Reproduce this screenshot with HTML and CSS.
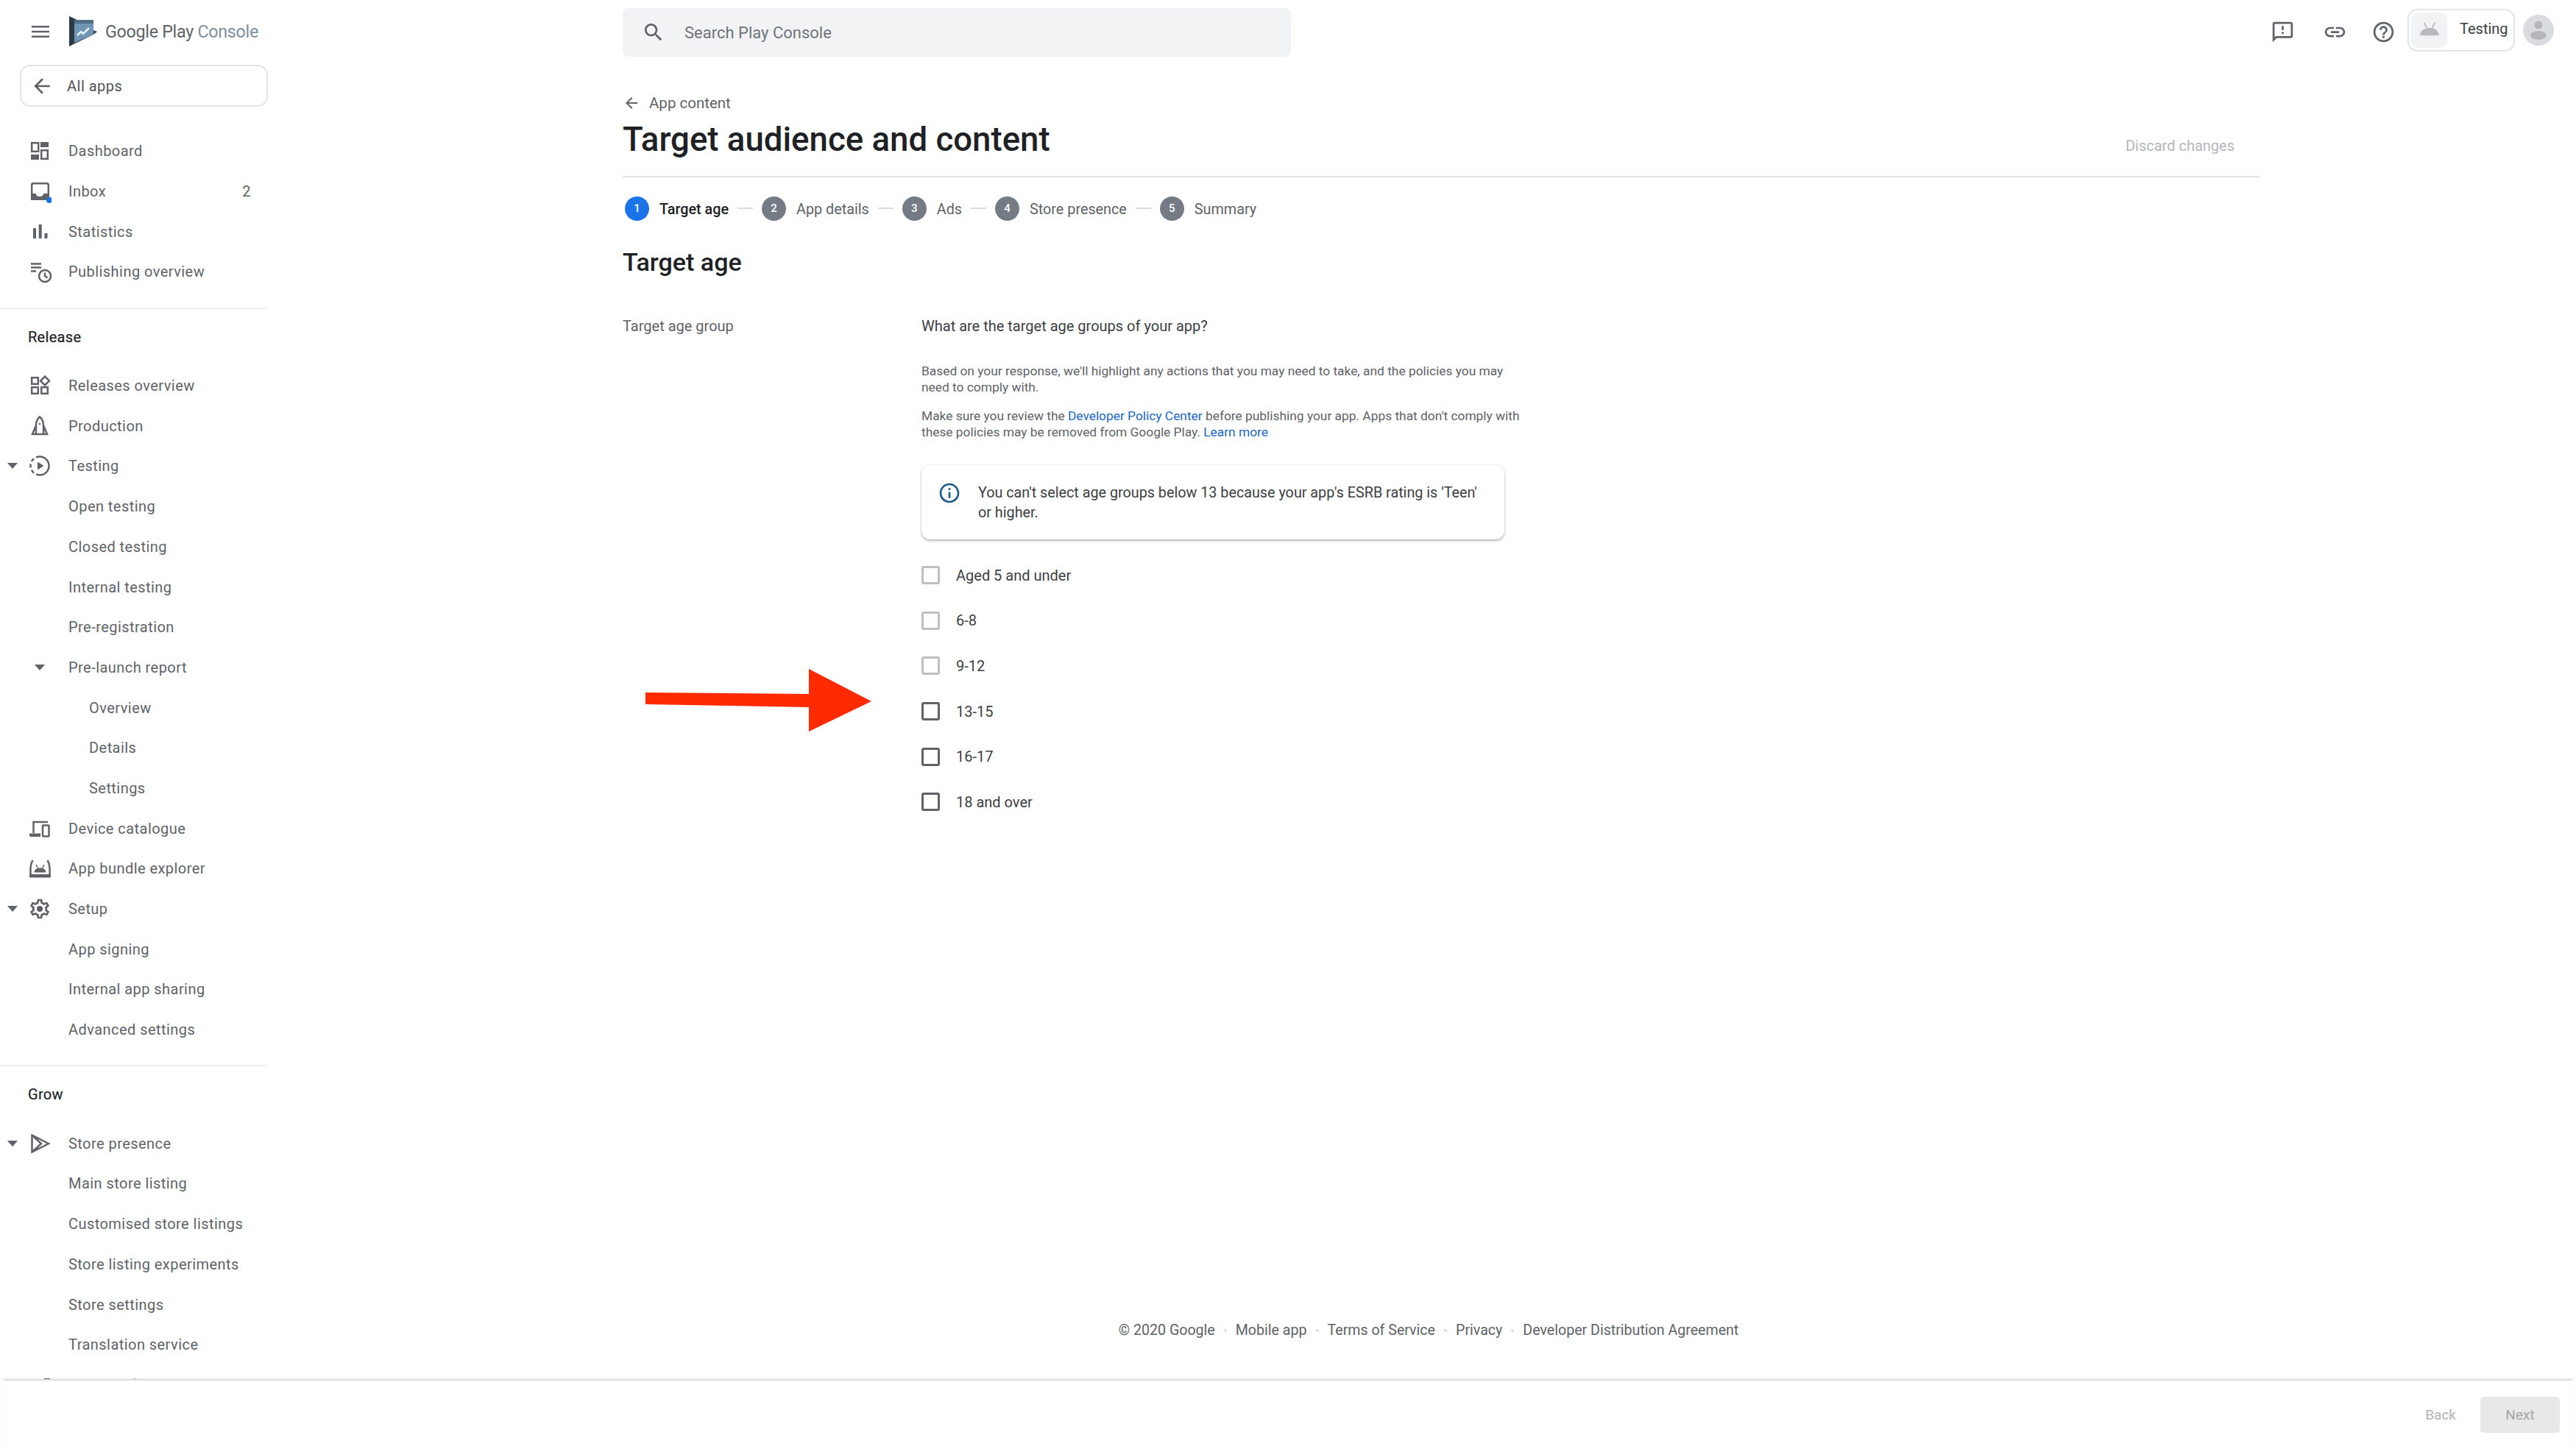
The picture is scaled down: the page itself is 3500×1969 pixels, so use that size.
FILE: index.html
```html
<!DOCTYPE html>
<html lang="en">
<head>
<meta charset="utf-8">
<title>Target audience and content</title>
<link rel="stylesheet" href="styles.css">
</head>
<body>
<svg class="defs" width="0" height="0" aria-hidden="true">
  <symbol id="i-back" viewBox="0 0 24 24"><path d="M20 11H7.83l5.59-5.59L12 4l-8 8 8 8 1.41-1.41L7.83 13H20v-2z"/></symbol>
  <symbol id="i-search" viewBox="0 0 24 24"><path d="M15.5 14h-.79l-.28-.27C15.41 12.59 16 11.11 16 9.5 16 5.91 13.09 3 9.5 3S3 5.91 3 9.5 5.91 16 9.5 16c1.61 0 3.09-.59 4.23-1.57l.27.28v.79l5 4.99L20.49 19l-4.99-5zm-6 0C7.01 14 5 11.99 5 9.5S7.01 5 9.5 5 14 7.01 14 9.5 11.99 14 9.5 14z"/></symbol>
  <symbol id="i-feedback" viewBox="0 0 24 24"><path d="M20 2H4c-1.1 0-1.99.9-1.99 2L2 22l4-4h14c1.1 0 2-.9 2-2V4c0-1.1-.9-2-2-2zm0 14H5.17L4 17.17V4h16v12zm-9-4h2v2h-2zm0-6h2v4h-2z"/></symbol>
  <symbol id="i-link" viewBox="0 0 24 24"><path d="M3.9 12c0-1.71 1.39-3.1 3.1-3.1h4V7H7c-2.76 0-5 2.24-5 5s2.24 5 5 5h4v-1.9H7c-1.71 0-3.1-1.39-3.1-3.1zM8 13h8v-2H8v2zm9-6h-4v1.9h4c1.71 0 3.1 1.39 3.1 3.1s-1.39 3.1-3.1 3.1h-4V17h4c2.76 0 5-2.24 5-5s-2.24-5-5-5z"/></symbol>
  <symbol id="i-help" viewBox="0 0 24 24"><path d="M11 18h2v-2h-2v2zm1-16C6.48 2 2 6.48 2 12s4.48 10 10 10 10-4.48 10-10S17.52 2 12 2zm0 18c-4.41 0-8-3.59-8-8s3.59-8 8-8 8 3.59 8 8-3.59 8-8 8zm0-14c-2.21 0-4 1.79-4 4h2c0-1.1.9-2 2-2s2 .9 2 2c0 2-3 1.75-3 5h2c0-2.25 3-2.5 3-5 0-2.21-1.79-4-4-4z"/></symbol>
  <symbol id="i-info" viewBox="0 0 24 24"><path d="M11 7h2v2h-2zm0 4h2v6h-2zm1-9C6.48 2 2 6.48 2 12s4.48 10 10 10 10-4.48 10-10S17.52 2 12 2zm0 18c-4.41 0-8-3.59-8-8s3.59-8 8-8 8 3.59 8 8-3.59 8-8 8z"/></symbol>
  <symbol id="i-gear" viewBox="0 0 24 24"><path d="M19.43 12.98c.04-.32.07-.64.07-.98 0-.34-.03-.66-.07-.98l2.11-1.65c.19-.15.24-.42.12-.64l-2-3.46c-.09-.16-.26-.25-.44-.25-.06 0-.12.01-.17.03l-2.49 1c-.52-.4-1.08-.73-1.69-.98l-.38-2.65C14.46 2.18 14.25 2 14 2h-4c-.25 0-.46.18-.49.42l-.38 2.65c-.61.25-1.17.59-1.69.98l-2.49-1c-.06-.02-.12-.03-.18-.03-.17 0-.34.09-.43.25l-2 3.46c-.13.22-.07.49.12.64l2.11 1.65c-.04.32-.07.65-.07.98 0 .33.03.66.07.98l-2.11 1.65c-.19.15-.24.42-.12.64l2 3.46c.09.16.26.25.44.25.06 0 .12-.01.17-.03l2.49-1c.52.4 1.08.73 1.69.98l.38 2.65c.03.24.24.42.49.42h4c.25 0 .46-.18.49-.42l.38-2.65c.61-.25 1.17-.59 1.69-.98l2.49 1c.06.02.12.03.18.03.17 0 .34-.09.43-.25l2-3.46c.12-.22.07-.49-.12-.64l-2.11-1.65zm-1.98-1.71c.04.31.05.52.05.73 0 .21-.02.43-.05.73l-.14 1.13.89.7 1.08.84-.7 1.21-1.27-.51-1.04-.42-.9.68c-.43.32-.84.56-1.25.73l-1.06.43-.16 1.13-.2 1.35h-1.4l-.19-1.35-.16-1.13-1.06-.43c-.43-.18-.83-.41-1.23-.71l-.91-.7-1.06.43-1.27.51-.7-1.21 1.08-.84.89-.7-.14-1.13c-.03-.31-.05-.54-.05-.74s.02-.43.05-.73l.14-1.13-.89-.7-1.08-.84.7-1.21 1.27.51 1.04.42.9-.68c.43-.32.84-.56 1.25-.73l1.06-.43.16-1.13.2-1.35h1.39l.19 1.35.16 1.13 1.06.43c.43.18.83.41 1.23.71l.91.7 1.06-.43 1.27-.51.7 1.21-1.07.85-.89.7.14 1.13z"/><circle cx="12" cy="12" r="3"/></symbol>
  <symbol id="i-caret" viewBox="0 0 14 8"><path d="M0 0h14L7 8z"/></symbol>
</svg>

<div class="app">
  <div class="main">
    <aside class="sidebar">
      <div class="brand">
        <svg class="menu" viewBox="0 0 24 16"><path d="M0 1.2h24M0 8h24M0 14.8h24"/></svg>
        <svg class="logo" viewBox="0 0 38 42">
          <path class="logo-dark" d="M0 0l11 5h22v14l5 2-5 4L0 41z"/>
          <path class="logo-side" d="M0 0l7 5v31l-7 5z"/>
          <path class="logo-top" d="M7 5h26v5H7z"/>
          <path class="logo-screen" d="M7 10h26v15L7 36z"/>
          <path class="logo-line" d="M11 26l5-5 3 3 8-8" />
        </svg>
        <span class="brand-name">Google Play <span class="brand-soft">Console</span></span>
      </div>
      <a class="all-apps"><svg class="ic all-back"><use href="#i-back"/></svg><span>All apps</span></a>

      <nav class="nav first">
        <a class="row"><i class="slot"></i><svg class="icon" viewBox="0 0 32 32"><rect class="ol" x="5.2" y="5.2" width="9" height="11.6"/><rect x="17" y="4" width="11" height="7"/><rect x="4" y="21" width="11" height="7"/><rect class="ol" x="18.2" y="15.2" width="8.6" height="11.6"/></svg><span>Dashboard</span></a>
        <a class="row"><i class="slot"></i><svg class="icon" viewBox="0 0 32 32"><rect class="ol" x="5.2" y="5.2" width="22.6" height="21.6" rx="2"/><path d="M4 19h7c0 3 2 4 5 4s5-1 5-4h8v9H4z"/><circle class="dot" cx="29" cy="28" r="4"/></svg><span>Inbox</span><b class="count">2</b></a>
        <a class="row"><i class="slot"></i><svg class="icon" viewBox="0 0 32 32"><rect x="7" y="11" width="4" height="14"/><rect x="14.7" y="6" width="4" height="19"/><rect x="22.5" y="18" width="4" height="7"/></svg><span>Statistics</span></a>
        <a class="row"><i class="slot"></i><svg class="icon" viewBox="0 0 32 32"><path class="ln" d="M4 5.5h14M4 10.5h14M4 15.5h7"/><circle class="ln" cx="23" cy="22" r="8"/><path class="ln" d="M23 17.5V22l3.5 2.5"/></svg><span>Publishing overview</span></a>
      </nav>

      <div class="rule"></div>
      <div class="group">Release</div>
      <nav class="nav">
        <a class="row"><i class="slot"></i><svg class="icon" viewBox="0 0 32 32"><rect class="ol" x="5.2" y="5.2" width="8.6" height="8.6"/><rect class="ol" x="5.2" y="18.2" width="8.6" height="8.6"/><rect class="ol" x="18.2" y="18.2" width="8.6" height="8.6"/><path class="ln" d="M23 3.5l6 6-6 6-6-6z"/></svg><span>Releases overview</span></a>
        <a class="row"><i class="slot"></i><svg class="icon" viewBox="0 0 32 32"><path class="ln" d="M6 27l5-12c0-5 2-9 5-11.500 3 2.500 5 6.500 5 11.500l5 12zM11 15v12M21 15v12"/><circle cx="16" cy="13" r="1.300"/></svg><span>Production</span></a>
        <a class="row"><i class="slot"><svg class="caret"><use href="#i-caret"/></svg></i><svg class="icon" viewBox="0 0 32 32"><path class="ln" d="M16 3.500a12.500 12.500 0 0 1 0 25"/><path class="ln dash" d="M16 28.500a12.500 12.500 0 0 1 0-25"/><path d="M13 10.500l8.500 5.500-8.500 5.500z"/></svg><span>Testing</span></a>
        <a class="row"><i class="slot"></i><i class="icon"></i><span>Open testing</span></a>
        <a class="row"><i class="slot"></i><i class="icon"></i><span>Closed testing</span></a>
        <a class="row"><i class="slot"></i><i class="icon"></i><span>Internal testing</span></a>
        <a class="row"><i class="slot"></i><i class="icon"></i><span>Pre-registration</span></a>
        <a class="row"><i class="slot"></i><i class="icon icon-caret"><svg class="caret"><use href="#i-caret"/></svg></i><span>Pre-launch report</span></a>
        <a class="row sub"><i class="slot"></i><i class="icon"></i><span>Overview</span></a>
        <a class="row sub"><i class="slot"></i><i class="icon"></i><span>Details</span></a>
        <a class="row sub"><i class="slot"></i><i class="icon"></i><span>Settings</span></a>
        <a class="row"><i class="slot"></i><svg class="icon" viewBox="0 0 32 32"><path class="ln" d="M27 7H7.500v15"/><path d="M2 22.500h15V27H3.500A1.500 1.500 0 0 1 2 25.500z"/><rect class="ol" x="20" y="11.500" width="8.500" height="15" rx="1"/></svg><span>Device catalogue</span></a>
        <a class="row"><i class="slot"></i><svg class="icon" viewBox="0 0 32 32"><path class="ln" d="M6.500 5C4 9 3.500 12 3.500 15v11.500h26V15c0-3-.5-6-3-10"/><path d="M8.500 21.500c.3-3.500 2.500-6 8-6s7.700 2.500 8 6z"/><path class="thin" d="M11 11l2.500 4.500M22 11l-2.500 4.500"/><rect x="2" y="24" width="29" height="4.500" rx="1"/></svg><span>App bundle explorer</span></a>
        <a class="row"><i class="slot"><svg class="caret"><use href="#i-caret"/></svg></i><svg class="icon"><use href="#i-gear"/></svg><span>Setup</span></a>
        <a class="row"><i class="slot"></i><i class="icon"></i><span>App signing</span></a>
        <a class="row"><i class="slot"></i><i class="icon"></i><span>Internal app sharing</span></a>
        <a class="row"><i class="slot"></i><i class="icon"></i><span>Advanced settings</span></a>
      </nav>

      <div class="rule"></div>
      <div class="group">Grow</div>
      <nav class="nav">
        <a class="row"><i class="slot"><svg class="caret"><use href="#i-caret"/></svg></i><svg class="icon" viewBox="0 0 32 32"><path class="ln" d="M5.500 4.500v23L28 16zM5.500 4.500L18 16 5.500 27.500"/></svg><span>Store presence</span></a>
        <a class="row"><i class="slot"></i><i class="icon"></i><span>Main store listing</span></a>
        <a class="row"><i class="slot"></i><i class="icon"></i><span>Customised store listings</span></a>
        <a class="row"><i class="slot"></i><i class="icon"></i><span>Store listing experiments</span></a>
        <a class="row"><i class="slot"></i><i class="icon"></i><span>Store settings</span></a>
        <a class="row"><i class="slot"></i><i class="icon"></i><span>Translation service</span></a>
        <a class="row"><i class="slot"></i><svg class="icon" viewBox="0 0 32 32"><rect x="22" y="7" width="8" height="20"/></svg><span>Store performance</span></a>
      </nav>
    </aside>

    <main class="content">
      <header class="topbar">
        <div class="search"><svg class="ic"><use href="#i-search"/></svg><span>Search Play Console</span></div>
        <div class="actions">
          <svg class="ic action"><use href="#i-feedback"/></svg>
          <svg class="ic action"><use href="#i-link"/></svg>
          <svg class="ic action"><use href="#i-help"/></svg>
          <div class="chip">
            <span class="chip-icon"><svg viewBox="0 0 32 24"><path d="M2 22c.3-7 6-11 14-11s13.700 4 14 11z"/><path class="android" d="M8 3l4 8M24 3l-4 8"/></svg></span>
            <span class="chip-text">Testing</span>
          </div>
          <span class="avatar"><svg viewBox="0 0 42 42"><circle cx="21" cy="14" r="5.500"/><ellipse cx="21" cy="28" rx="11" ry="6"/></svg></span>
        </div>
      </header>

      <div class="page">
        <a class="crumb"><svg class="ic"><use href="#i-back"/></svg><span>App content</span></a>
        <div class="title-row">
          <h1>Target audience and content</h1>
          <span class="discard">Discard changes</span>
        </div>

        <ol class="steps">
          <li class="step active"><b>1</b><span>Target age</span></li>
          <li class="link"></li>
          <li class="step"><b>2</b><span>App details</span></li>
          <li class="link"></li>
          <li class="step"><b>3</b><span>Ads</span></li>
          <li class="link"></li>
          <li class="step"><b>4</b><span>Store presence</span></li>
          <li class="link"></li>
          <li class="step"><b>5</b><span>Summary</span></li>
        </ol>

        <h2>Target age</h2>

        <section class="form">
          <div class="form-label">Target age group</div>
          <div class="form-body">
            <div class="question">What are the target age groups of your app?</div>
            <p class="note first-note">Based on your response, we'll highlight any actions that you may need to take, and the policies you may need to comply with.</p>
            <p class="note second-note">Make sure you review the <a>Developer Policy Center</a> before publishing your app. Apps that don't comply with these policies may be removed from Google Play. <a>Learn more</a></p>
            <div class="card"><svg class="ic info"><use href="#i-info"/></svg><span>You can't select age groups below 13 because your app's ESRB rating is 'Teen' or higher.</span></div>
            <ul class="options">
              <li class="option off"><i class="box"></i><span>Aged 5 and under</span></li>
              <li class="option off"><i class="box"></i><span>6-8</span></li>
              <li class="option off"><i class="box"></i><span>9-12</span></li>
              <li class="option"><i class="box"></i><span>13-15</span></li>
              <li class="option"><i class="box"></i><span>16-17</span></li>
              <li class="option"><i class="box"></i><span>18 and over</span></li>
            </ul>
          </div>
        </section>

        <footer class="footer">
          <span>© 2020 Google</span><i></i><a>Mobile app</a><i></i><a>Terms of Service</a><i></i><a>Privacy</a><i></i><a>Developer Distribution Agreement</a>
        </footer>
      </div>
    </main>
  </div>

  <div class="bottom">
    <span class="btn-back">Back</span>
    <span class="btn-next">Next</span>
  </div>

  <svg class="arrow" viewBox="0 0 308 86"><polygon points="0,32 222,34 222,0 307,44 222,85 222,52 0,48"/></svg>
</div>
</body>
</html>
```

FILE: styles.css
```css
* { box-sizing: border-box; }
html, body { margin: 0; padding: 0; background: #fff; }
body { font-family: Roboto, "Liberation Sans", sans-serif; color: #202124; }
a { color: inherit; text-decoration: none; }
.defs { position: absolute; }
.ic { fill: #5f6368; display: block; flex: none; }

.app { position: relative; width: 3500px; height: 1969px; display: flex; flex-direction: column; overflow: hidden; }
.main { flex: 1; min-height: 0; display: flex; overflow: hidden; }

/* sidebar */
.sidebar { width: 364px; flex: none; overflow: hidden; color: #5f6368; font-size: 20px; letter-spacing: .45px; }
.brand { height: 88px; display: flex; align-items: flex-start; padding: 22px 0 0 43px; }
.menu { width: 24px; height: 16px; margin: 13px 27px 0 0; fill: none; stroke: #5f6368; stroke-width: 2.4; }
.logo { width: 38px; height: 42px; margin-right: 11px; }
.logo-dark { fill: #37474f; }
.logo-side { fill: #2b3a44; }
.logo-top { fill: #4f6f87; }
.logo-screen { fill: #6f97b3; }
.logo-line { fill: none; stroke: #e6eff5; stroke-width: 2.600; }
.brand-name { font-size: 23.300px; letter-spacing: -.3px; line-height: 42px; color: #5f6368; white-space: nowrap; }
.brand-soft { color: #7f8f9c; }
.all-apps { display: flex; align-items: center; height: 57px; width: 337px; margin-left: 27px; border: 2px solid #e3e4e6; border-radius: 14px; color: #4f5358; letter-spacing: .5px; }
.all-back { width: 32px; height: 32px; margin: 0 18px 0 12px; }

.nav.first { margin-top: 33px; }
.row { display: flex; align-items: center; height: 54.700px; white-space: nowrap; }
.slot { width: 38px; flex: none; padding-left: 10px; display: flex; align-items: center; }
.icon { width: 32px; height: 32px; flex: none; margin-right: 23px; fill: #5f6368; display: flex; align-items: center; justify-content: center; }
.sub span { margin-left: 28px; }
.caret { width: 14px; height: 8px; fill: #5f6368; display: block; }
.ol, .ln { fill: none; stroke: #5f6368; stroke-width: 2.500; }
.thin { fill: none; stroke: #5f6368; stroke-width: 1.500; }
.dash { stroke-dasharray: 5 3.500; }
.dot { fill: #1a73e8; }
.count { margin-left: auto; margin-right: 23px; font-weight: 400; }
.rule { height: 2px; width: 362px; background: #eff0f1; margin-top: 21px; }
.group { height: 52px; margin: 12px 0 13px; padding-left: 38px; line-height: 52px; color: #202124; letter-spacing: .3px; -webkit-text-stroke: .2px #202124; }

/* content */
.content { flex: 1; min-width: 0; padding-left: 482px; display: flex; flex-direction: column; }
.topbar { height: 88px; flex: none; display: flex; align-items: flex-start; justify-content: space-between; padding-right: 30px; }
.search { width: 908px; height: 66px; margin-top: 11px; background: #f1f3f4; border-radius: 8px; display: flex; align-items: center; gap: 26px; padding-left: 26px; font-size: 22px; color: #70757a; }
.search .ic { width: 32px; height: 32px; }
.actions { display: flex; align-items: flex-start; }
.action { width: 33px; height: 33px; margin-top: 27px; margin-right: 38px; }
.action:nth-child(2) { margin-right: 33px; }
.action:nth-child(3) { margin-right: 16px; }
.chip { width: 146px; height: 58px; margin-top: 12px; border: 2px solid #e3e4e6; border-radius: 14px; padding: 3px; display: flex; align-items: center; gap: 17px; }
.chip-icon { width: 49px; height: 48px; flex: none; border-radius: 10px; background: #f1f3f4; display: flex; align-items: center; justify-content: center; }
.chip-icon svg { width: 30px; height: 22px; margin-top: -4px; fill: #b8bbbe; }
.android { fill: none; stroke: #b8bbbe; stroke-width: 2; }
.chip-text { font-size: 20px; color: #3c4043; margin-top: -4px; }
.avatar { width: 42px; height: 42px; margin: 20px 0 0 11px; border-radius: 50%; background: #dadce0; display: block; }
.avatar svg { width: 42px; height: 42px; fill: #b4b6b9; display: block; }

.page { flex: 1; min-height: 0; width: 2224px; display: flex; flex-direction: column; }
.crumb { margin-top: 37px; height: 30px; display: flex; align-items: center; gap: 12px; color: #5f6368; font-size: 20.500px; }
.crumb .ic { width: 24px; height: 24px; }
.title-row { margin-top: 9px; padding-bottom: 23px; border-bottom: 2px solid #e3e4e6; display: flex; justify-content: space-between; }
h1 { margin: 0; font-size: 45.600px; line-height: 52px; font-weight: 500; color: #202124; }
.discard { margin: 20px 34px 0 0; font-size: 20px; line-height: 28px; color: #b4b6b9; }
.steps { list-style: none; margin: 25px 0 0; padding: 0 0 0 3px; height: 34px; display: flex; align-items: center; font-size: 19.800px; color: #5f6368; }
.step { display: flex; align-items: center; gap: 14px; }
.step span { position: relative; top: 1px; }
.step b { width: 33px; height: 33px; border-radius: 50%; background: #757b85; color: #fff; font-size: 15px; font-weight: 500; display: flex; align-items: center; justify-content: center; }
.step.active b { background: #1a73e8; }
.step.active span { color: #202124; font-weight: 500; }
.link { width: 21px; height: 2px; margin: 0 12px 0 12px; background: #dadce0; }
h2 { margin: 36px 0 0; font-size: 34px; line-height: 40px; font-weight: 500; color: #202124; }

.form { margin-top: 53px; display: flex; font-size: 20px; line-height: 28px; }
.form-label { width: 406px; flex: none; color: #5f6368; }
.form-body { width: 820px; }
.question { color: #3c4043; }
.note { width: 820px; margin: 0; font-size: 17.350px; line-height: 22px; color: #5f6368; }
.first-note { margin-top: 36px; }
.second-note { margin-top: 17px; }
.note a { color: #1a66c9; }
.card { width: 792px; height: 101px; margin-top: 34px; border-radius: 12px; box-shadow: 0 2px 3px rgba(60,64,67,.35), 0 0 3px rgba(60,64,67,.12); padding: 24px 30px 0 22px; display: flex; gap: 23px; font-size: 19.750px; line-height: 27px; color: #3c4043; }
.info { width: 32px; height: 32px; fill: #185a8c; margin-top: -2px; }
.options { list-style: none; margin: 18px 0 0; padding: 0; }
.option { height: 61.600px; display: flex; align-items: center; gap: 22px; color: #3c4043; }
.box { width: 25px; height: 25px; flex: none; border: 3px solid #5f6368; border-radius: 3px; }
.off .box { border-color: #bdbfc2; }

.footer { margin-top: auto; width: 2190px; padding-bottom: 52px; display: flex; justify-content: center; align-items: center; font-size: 19.600px; line-height: 28px; color: #5f6368; }
.footer i { width: 4px; height: 4px; border-radius: 50%; background: #dadce0; margin: 0 12px; }

/* bottom */
.bottom { height: 95px; flex: none; margin: 0 5px; border-top: 2px solid #dcdddd; box-shadow: 0 -2px 3px rgba(60,64,67,.06); display: flex; align-items: center; justify-content: flex-end; padding: 0 17px 0 0; }
.btn-back { font-size: 19px; color: #b0b2b4; margin-right: 33px; }
.btn-next { width: 108px; height: 49px; background: #e8e8e8; border-radius: 5px; color: #a2a4a6; font-size: 19px; display: flex; align-items: center; justify-content: center; }

.arrow { position: absolute; left: 877px; top: 909px; width: 308px; height: 86px; fill: #ff2a00; }
```
